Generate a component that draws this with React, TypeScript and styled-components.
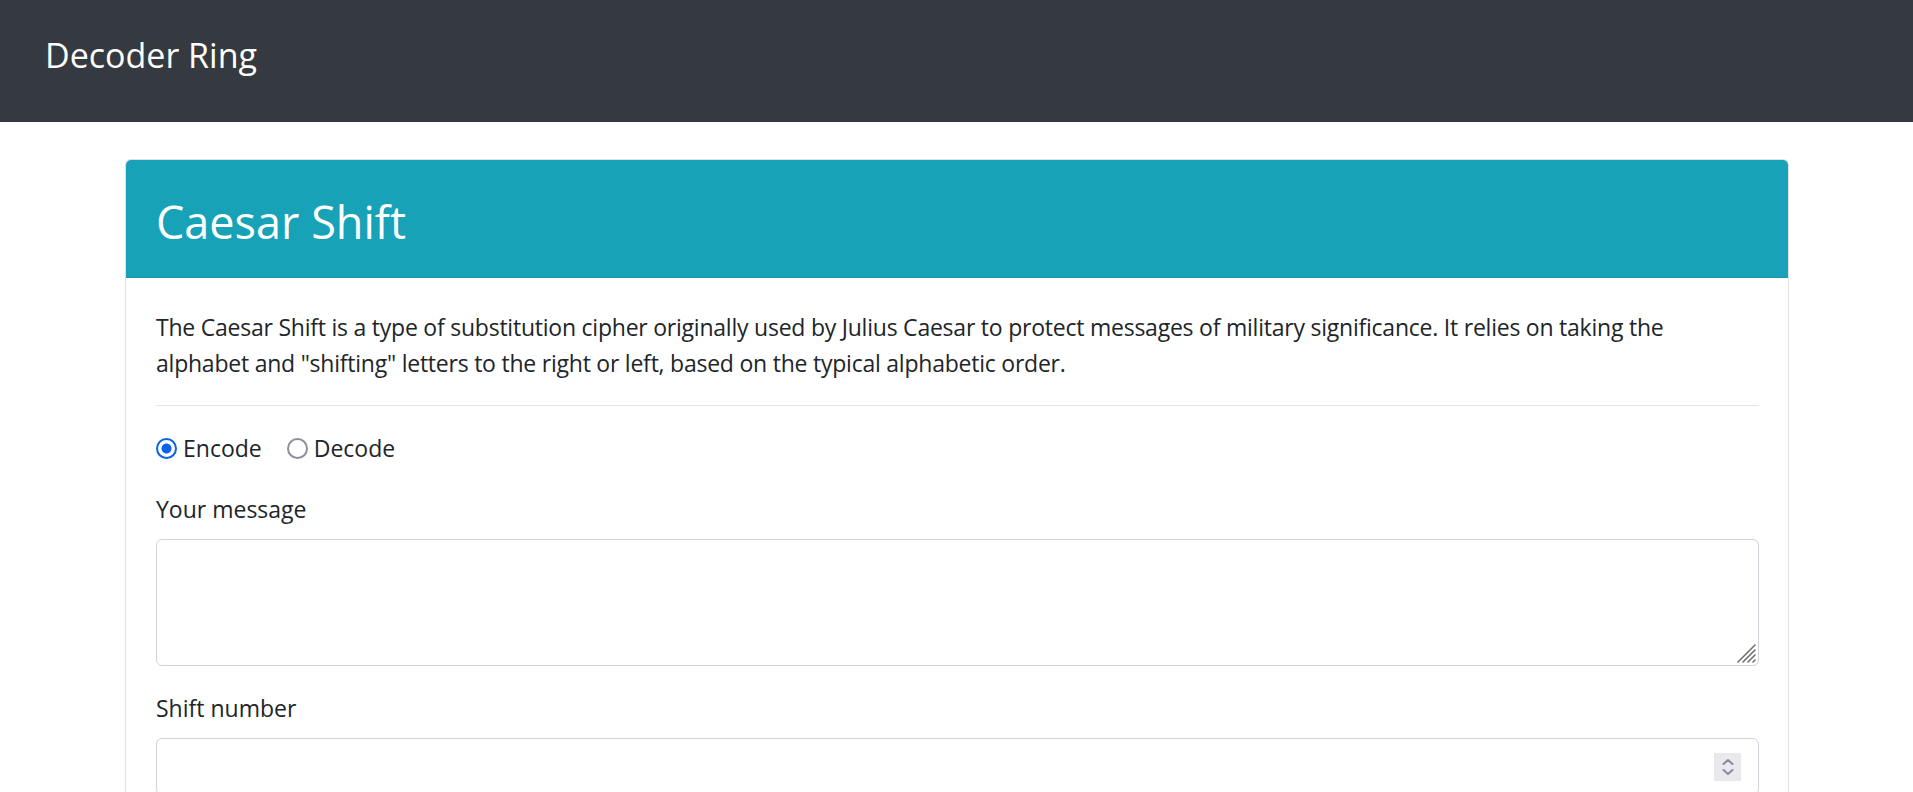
import React from "react";
import styled, { createGlobalStyle } from "styled-components";

const GlobalStyle = createGlobalStyle`
  html, body { margin: 0; padding: 0; background: #ffffff; }
  body {
    font-family: "Segoe UI", "Open Sans", "Noto Sans", sans-serif;
    color: #212529;
    font-size: 23px;
    line-height: 36px;
  }
  * { box-sizing: border-box; }
`;

const Navbar = styled.nav`
  height: 122px;
  background: #343a40;
  display: flex;
  align-items: center;
  padding: 0 0 11px 45px;
`;

const Brand = styled.a`
  color: #ffffff;
  font-size: 34px;
  line-height: 1.5;
  text-decoration: none;
  white-space: nowrap;
`;

const Container = styled.main`
  padding: 37px 124px 0 125px;
`;

const Card = styled.section`
  border: 1px solid rgba(0, 0, 0, 0.125);
  border-radius: 6px;
  overflow: hidden;
  background: #fff;
`;

const CardHeader = styled.header`
  background: #17a2b8;
  border-bottom: 1px solid #1792a6;
  height: 118px;
  padding: 7px 30px 0;
  display: flex;
  align-items: center;
`;

const Title = styled.h2`
  margin: 0;
  color: #ffffff;
  font-size: 45px;
  font-weight: 400;
  line-height: 1.2;
`;

const CardBody = styled.div`
  padding: 31px 29px 30px 30px;
`;

const Lead = styled.p`
  margin: 0 0 24px;
  max-width: 1545px;
  letter-spacing: -0.23px;
`;

const Rule = styled.hr`
  margin: 0 0 24px;
  border: 0;
  border-top: 1.5px solid rgba(0, 0, 0, 0.1);
`;

const RadioRow = styled.div`
  display: flex;
  align-items: center;
  gap: 25px;
  margin-bottom: 25px;
`;

const RadioLabel = styled.label`
  display: inline-flex;
  align-items: center;
  gap: 6px;
  cursor: pointer;
`;

const Radio = styled.input`
  appearance: none;
  width: 21px;
  height: 21px;
  margin: 0;
  border-radius: 50%;
  border: 2.5px solid #8f8f9d;
  background: #fff;
  &:checked {
    border-color: #0b63e5;
    background: radial-gradient(circle, #0b63e5 0 4.6px, #ffffff 5.4px);
  }
`;

const Group = styled.div`
  margin-bottom: 24px;
`;

const FieldLabel = styled.label`
  display: block;
  margin-bottom: 12px;
`;

const FieldWrap = styled.div`
  position: relative;
`;

const TextArea = styled.textarea`
  display: block;
  width: 100%;
  height: 127px;
  padding: 9px 18px;
  font: inherit;
  color: #495057;
  border: 1.5px solid #ced4da;
  border-radius: 6px;
  resize: none;
  outline: none;
`;

const Grip = styled.svg`
  position: absolute;
  right: 2px;
  bottom: 2px;
  pointer-events: none;
`;

const Input = styled.input`
  display: block;
  width: 100%;
  height: 57px;
  padding: 9px 18px;
  font: inherit;
  color: #495057;
  border: 1.5px solid #ced4da;
  border-radius: 6px;
  outline: none;
`;

const Stepper = styled.div`
  position: absolute;
  top: 15px;
  right: 18px;
  width: 27px;
  height: 28px;
  background: #e9e9ed;
  display: flex;
  align-items: center;
  justify-content: center;
`;

export default function App() {
  return (
    <>
      <GlobalStyle />
      <Navbar>
        <Brand href="#">Decoder Ring</Brand>
      </Navbar>
      <Container>
        <Card>
          <CardHeader>
            <Title>Caesar Shift</Title>
          </CardHeader>
          <CardBody>
            <Lead>
              The Caesar Shift is a type of substitution cipher originally used by Julius Caesar to
              protect messages of military significance. It relies on taking the alphabet and
              "shifting" letters to the right or left, based on the typical alphabetic order.
            </Lead>
            <Rule />
            <RadioRow>
              <RadioLabel>
                <Radio type="radio" name="mode" defaultChecked />
                Encode
              </RadioLabel>
              <RadioLabel>
                <Radio type="radio" name="mode" />
                Decode
              </RadioLabel>
            </RadioRow>
            <Group>
              <FieldLabel htmlFor="msg">Your message</FieldLabel>
              <FieldWrap>
                <TextArea id="msg" />
                <Grip width="22" height="22" viewBox="0 0 22 22" stroke="#6f6f6f" strokeWidth="1.6" strokeLinecap="round">
                  <path d="M3 20 L20 3" />
                  <path d="M8 20 L20 8" />
                  <path d="M13 20 L20 13" />
                  <path d="M18 20 L20 18" />
                </Grip>
              </FieldWrap>
            </Group>
            <Group>
              <FieldLabel htmlFor="shift">Shift number</FieldLabel>
              <FieldWrap>
                <Input id="shift" type="text" />
                <Stepper>
                  <svg width="14" height="20" viewBox="0 0 14 20" fill="none" stroke="#8b8b95" strokeWidth="2" strokeLinecap="round" strokeLinejoin="round">
                    <path d="M2.5 7 L7 3 L11.5 7" />
                    <path d="M2.5 13 L7 17 L11.5 13" />
                  </svg>
                </Stepper>
              </FieldWrap>
            </Group>
          </CardBody>
        </Card>
      </Container>
    </>
  );
}
